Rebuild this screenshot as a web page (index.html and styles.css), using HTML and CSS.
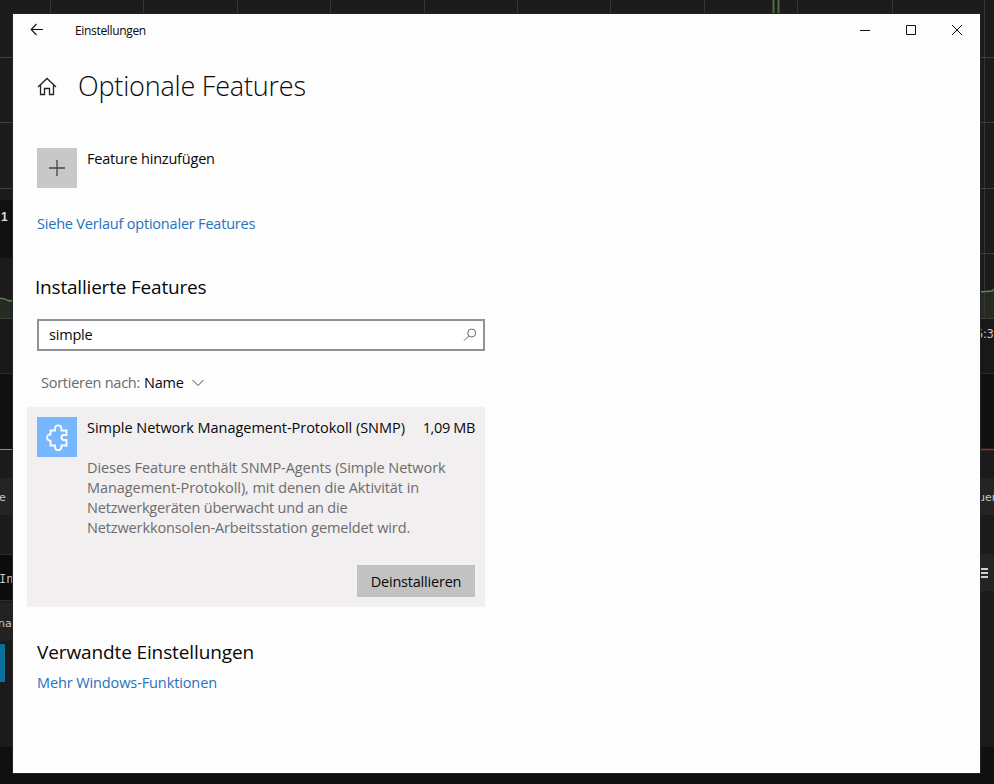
FILE: index.html
```html
<!DOCTYPE html>
<html lang="de">
<head>
<meta charset="utf-8">
<title>Einstellungen</title>
<link rel="stylesheet" href="styles.css">
</head>
<body>
<svg class="backdrop" width="994" height="784" viewBox="0 0 994 784" aria-hidden="true">
  <rect width="994" height="784" fill="#1c1a1b"/>
  <rect y="200" width="13" height="58" fill="#121011"/>
  <rect y="318" width="994" height="56" fill="#191818"/>
  <rect y="374" width="994" height="75" fill="#111010"/>
  <rect y="478" width="994" height="37" fill="#242424"/>
  <rect y="555" width="13" height="46" fill="#0d0c0c"/>
  <rect y="603" width="13" height="38" fill="#222"/>
  <rect x="980" y="554" width="14" height="37" fill="#242424"/>
  <rect y="644" width="5" height="38" fill="#08709b"/>
  <rect y="747" width="994" height="37" fill="#111011"/>
  <path d="M0 298.500Q4 298 8 300.500L13 301V318H0ZM980 292L994 290V318H980Z" fill="#252b20"/>
  <path d="M50.500 0V14M143.500 0V14M237.500 0V14M330.500 0V14M424.500 0V14M517.500 0V14M610.500 0V14M704.500 0V14M797.500 0V14M892.500 0V14M984.500 0V318" stroke="#363435" fill="none"/>
  <path d="M0 57.500H994M0 122.500H994M0 188.500H994M980 253.500H994M0 318.500H994" stroke="#403e3f" fill="none"/>
  <path d="M0 373.500H994M0 554.500H13M0 600.500H13" stroke="#2c2b2b" fill="none"/>
  <path d="M0 298.500Q4 298 8 300.500L13 301M980 292L992 291L994 289" stroke="#64815a" stroke-width="1.300" fill="none"/>
  <path d="M773.500 0V14M778.500 0V14" stroke="#4b7140" stroke-width="2"/>
  <rect y="449" width="13" height="1" fill="#b58a28"/>
  <path d="M980 449.500H994" stroke="#9b3020" stroke-width="1.500"/>
  <path d="M980 569H988M980 573H988M980 577H988" stroke="#d0d0d0" stroke-width="1.800"/>
  <g class="backdrop-text">
    <text x="1" y="221" class="strong">1</text>
    <text x="-1" y="501">e</text>
    <text x="-1" y="583" class="mono">In</text>
    <text x="-2" y="627">na</text>
    <text x="976" y="338" class="time">5:3</text>
    <text x="978" y="501">uer</text>
  </g>
</svg>
<main class="window">
  <header class="titlebar">
    <svg class="back" width="14" height="14" viewBox="0 0 14 14"><path d="M13 6.500H1.500M6.500 1L1.200 6.500L6.500 12"/></svg>
    <span class="app-name">Einstellungen</span>
    <div class="controls">
      <svg width="46" height="32" viewBox="0 0 46 32"><path d="M18 16.500H28"/></svg>
      <svg width="46" height="32" viewBox="0 0 46 32"><path d="M18.500 11.500H27.500V20.500H18.500Z"/></svg>
      <svg width="46" height="32" viewBox="0 0 46 32"><path d="M18 11L28 21M28 11L18 21"/></svg>
    </div>
  </header>
  <div class="page-head">
    <svg class="home" width="20" height="20" viewBox="0 0 20 20"><path d="M1 10L10 1.500L19 10M3.500 8V17.500H7.500V11.500H12.500V17.500H16.500V8"/></svg>
    <h1>Optionale Features</h1>
  </div>
  <section class="content">
    <div class="add">
      <span class="add-tile"><svg width="40" height="40" viewBox="0 0 40 40"><path d="M12 20H28M20 12V28"/></svg></span>
      <span class="add-label">Feature hinzufügen</span>
    </div>
    <a class="link history">Siehe Verlauf optionaler Features</a>
    <h2 class="installed">Installierte Features</h2>
    <div class="search">
      <span class="query">simple</span>
      <svg width="14" height="14" viewBox="0 0 14 14"><circle cx="8.700" cy="5" r="4"/><path d="M5.800 7.900L1 12.700"/></svg>
    </div>
    <div class="sort">
      <span class="sort-label">Sortieren nach:</span><span class="sort-value">Name</span>
      <svg width="12" height="8" viewBox="0 0 12 8"><path d="M.5 1L6 6.500L11.500 1"/></svg>
    </div>
    <article class="feature">
      <svg class="feature-icon" width="40" height="40" viewBox="0 0 40 40"><path d="M13.500 13.500H18V11.500A3.200 3.200 0 0 1 24.400 11.500V13.500H29.500V18H27A2.500 2.500 0 0 0 27 23H29.500V28.500H24.400V30A3.200 3.200 0 0 1 18 30V28.500H13.500V23.700H12.500A3.200 3.200 0 0 1 12.500 17.500H13.500Z"/></svg>
      <div class="feature-body">
        <div class="feature-head"><span class="feature-name">Simple Network Management-Protokoll (SNMP)</span><span class="size">1,09 MB</span></div>
        <p><span class="loose">Dieses Feature enthält SNMP-Agents (Simple Network</span><br><span class="loose">Management-Protokoll), mit denen die Aktivität in</span><br>Netzwerkgeräten überwacht und an die<br><span class="medium">Netzwerkkonsolen-Arbeitsstation gemeldet wird.</span></p>
        <button>Deinstallieren</button>
      </div>
    </article>
    <h2 class="related">Verwandte Einstellungen</h2>
    <a class="link more">Mehr Windows-Funktionen</a>
  </section>
</main>
</body>
</html>
```
FILE: styles.css
```css
* { box-sizing: border-box; }
body {
  margin: 0;
  width: 994px;
  height: 784px;
  overflow: hidden;
  display: grid;
  background: #1c1a1b;
  color: #080808;
  font: 14.5px/20px "Open Sans", "Noto Sans", sans-serif;
  letter-spacing: -0.2px;
}
svg { display: block; flex: none; fill: none; }
.backdrop, .window { grid-area: 1 / 1; }
.backdrop-text { fill: #c4c4c4; font: 11px "DejaVu Sans", sans-serif; letter-spacing: 0; }
.backdrop-text .strong { font: bold 12px "Liberation Sans", sans-serif; fill: #ddd; }
.backdrop-text .mono { font: 12px "DejaVu Sans Mono", monospace; }
.backdrop-text .time { font-size: 11.5px; letter-spacing: -0.3px; }
.window {
  width: 967px;
  height: 759px;
  margin: 14px 0 0 13px;
  background: #fefdfe;
  box-shadow: 0 0 0 1px #252425;
  position: relative;
}
.titlebar { display: flex; height: 32px; padding-left: 17px; stroke: #111; }
.back { margin-top: 9px; stroke-width: 1.1; }
.app-name { margin: 7px 0 0 31px; font-size: 12px; letter-spacing: -0.33px; stroke: none; }
.controls { display: flex; margin-left: auto; }
.page-head { display: flex; padding: 17px 0 0 24px; height: 60px; }
.home { margin-top: 14px; stroke: #222; stroke-width: 1.3; }
h1 { margin: 0 0 0 21px; font-size: 27px; line-height: 46px; font-weight: 300; letter-spacing: -0.2px; }
.content { width: 448px; margin: 42px 0 0 24px; white-space: nowrap; }
.add { display: flex; gap: 10px; height: 40px; }
.add-tile { background: #c9c8c9; stroke: #444; stroke-width: 1.3; }
.add-label { margin-top: 1px; }
.link { display: block; color: #2473bd; }
.history { margin-top: 26px; }
h2 { margin: 0; font-size: 19px; line-height: 28px; font-weight: 400; letter-spacing: -0.2px; }
.installed { margin: 39px 0 0 -2px; }
.search {
  display: flex;
  align-items: center;
  justify-content: space-between;
  height: 32px;
  margin-top: 18px;
  padding: 0 6px 0 10px;
  border: 2px solid #929193;
  background: #fff;
}
.search svg { stroke: #666; }
.sort { display: flex; align-items: center; margin: 22px 0 0 4px; height: 20px; color: #6b6a6b; }
.sort-label { letter-spacing: -0.26px; }
.sort-value { margin-left: 4px; color: #080808; }
.sort svg { margin-left: 8px; stroke: #444; }
.feature { display: flex; gap: 10px; width: 458px; height: 200px; margin: 14px 0 0 -10px; padding: 10px; background: #f1eff0; }
.feature-icon { background: #76b7ff; stroke: #fff; stroke-width: 1.8; }
.feature-body { flex: 1; display: flex; flex-direction: column; align-items: flex-start; }
.feature-head { display: flex; justify-content: space-between; width: 100%; margin-top: 1px; }
.feature-name { letter-spacing: -0.03px; }
.size { letter-spacing: -0.35px; }
p { margin: 20px 0 0; color: #6d6c6d; }
.loose { letter-spacing: -0.07px; }
.medium { letter-spacing: -0.13px; }
button {
  width: 118px;
  height: 32px;
  margin: auto 0 0 auto;
  padding: 2px 0 0;
  border: 0;
  background: #c3c2c3;
  color: #080808;
  font: inherit;
  letter-spacing: inherit;
}
.related { margin-top: 31px; letter-spacing: -0.12px; }
.more { margin-top: 7px; letter-spacing: -0.11px; }
```
